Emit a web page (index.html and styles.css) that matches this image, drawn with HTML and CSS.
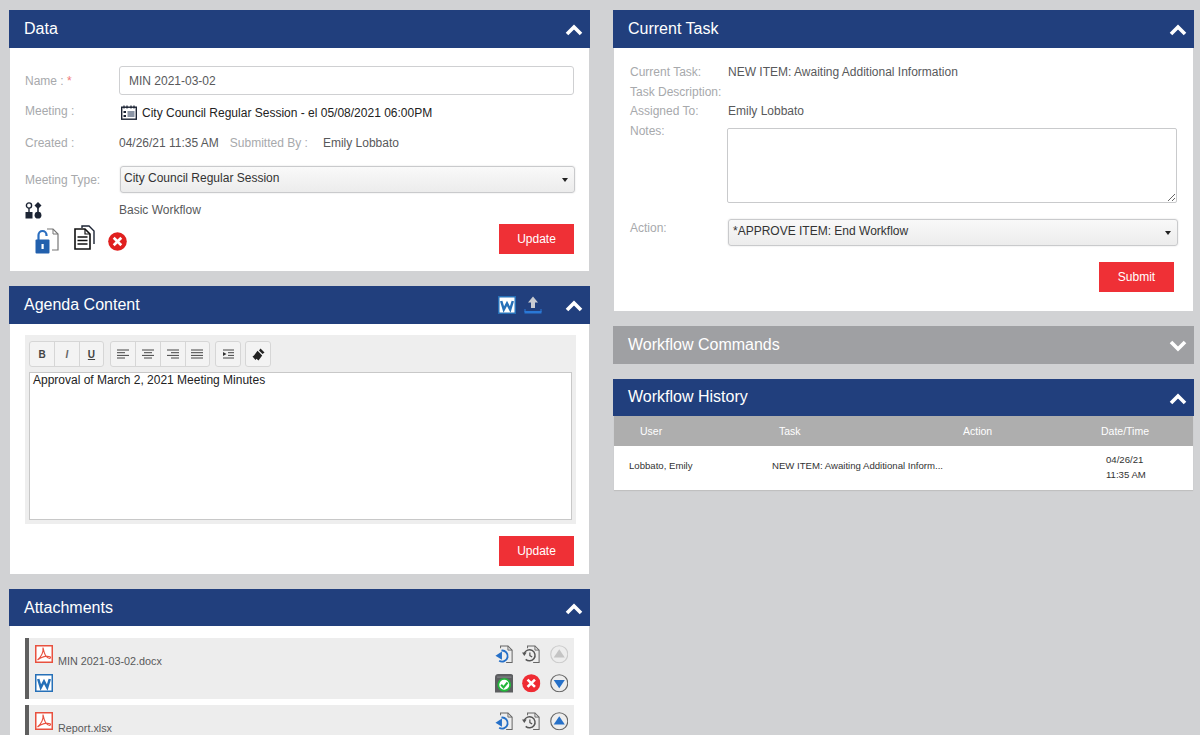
FILE: index.html
```html
<!DOCTYPE html>
<html lang="en">
<head>
  <meta charset="UTF-8">
  <title>Agenda Item</title>
  <link rel="stylesheet" href="styles.css">
</head>
<body>

<svg class="sprites" width="0" height="0">
  <symbol id="chev-up" viewBox="0 0 18 12"><path d="M2 10 L9 3 L16 10" fill="none" stroke="#fff" stroke-width="3.6"/></symbol>
  <symbol id="chev-down" viewBox="0 0 18 12"><path d="M2 2 L9 9 L16 2" fill="none" stroke="#fff" stroke-width="3.6"/></symbol>
  <symbol id="word" viewBox="0 0 18 18"><rect x="0.75" y="0.75" width="16.5" height="16.5" fill="#fff" stroke="#2670b8" stroke-width="1.5"/><path d="M3.2 5 L5.8 13.5 L9 7.5 L12.2 13.5 L14.8 5" fill="none" stroke="#2670b8" stroke-width="2.5"/></symbol>
  <symbol id="pdf" viewBox="0 0 18 18"><rect x="0.75" y="0.75" width="16.5" height="16.5" fill="#fff" stroke="#e8513f" stroke-width="1.5"/><path d="M8 2.5 C8.5 7 6 12 2.5 15 C6 12 12 10 15.5 12 C16 14 13 14 10.5 10.5 C9 8 8.5 5 8 2.5 Z" fill="none" stroke="#e8513f" stroke-width="1.1"/></symbol>
  <symbol id="x-red" viewBox="0 0 20 20"><circle cx="10" cy="10" r="9.8" fill="#e0201f"/><path d="M6 6 L14 14 M14 6 L6 14" stroke="#fff" stroke-width="2.8"/></symbol>
  <symbol id="x-bright" viewBox="0 0 20 20"><circle cx="10" cy="10" r="9.8" fill="#ef2b33"/><path d="M6 6 L14 14 M14 6 L6 14" stroke="#fff" stroke-width="2.8"/></symbol>
  <symbol id="doc-in" viewBox="0 0 20 20"><path d="M6 3.5 V1 H14 L18.5 5.5 V19 H12" fill="none" stroke="#666" stroke-width="1.1"/><path d="M14 1 V5.5 H18.5" fill="none" stroke="#666" stroke-width="1"/><path d="M7 6 A6 6 0 1 1 4.5 17" fill="none" stroke="#2670c8" stroke-width="2"/><path d="M0.5 11.5 L7.5 7 V16 Z" fill="#2670c8"/></symbol>
  <symbol id="doc-hist" viewBox="0 0 20 20"><path d="M6 3.5 V1 H14 L18.5 5.5 V19 H12" fill="none" stroke="#666" stroke-width="1.1"/><path d="M14 1 V5.5 H18.5" fill="none" stroke="#666" stroke-width="1"/><path d="M2.5 9 A6 6 0 1 1 4 15.5" fill="none" stroke="#555" stroke-width="1.6"/><path d="M0 8 H5 L2.5 12 Z" fill="#555"/><path d="M8.5 8 V11.5 L11 13" fill="none" stroke="#555" stroke-width="1.3"/></symbol>
  <symbol id="up-on" viewBox="0 0 20 20"><circle cx="10" cy="10" r="9.2" fill="none" stroke="#666" stroke-width="1.2"/><path d="M10 4.5 L16 13.5 H4 Z" fill="#2670c8"/></symbol>
  <symbol id="up-off" viewBox="0 0 20 20"><circle cx="10" cy="10" r="9.2" fill="none" stroke="#ccc" stroke-width="1.2"/><path d="M10 4.5 L16 13.5 H4 Z" fill="#c4c4c4"/></symbol>
  <symbol id="down-on" viewBox="0 0 20 20"><circle cx="10" cy="10" r="9.2" fill="none" stroke="#666" stroke-width="1.2"/><path d="M10 15.5 L16 6.5 H4 Z" fill="#2670c8"/></symbol>
</svg>

<div class="page">

  <div class="column">

    <div class="panel">
      <div class="panel-head">
        <h2>Data</h2>
        <svg class="chev"><use href="#chev-up"/></svg>
      </div>
      <div class="data-body">
        <div class="row row-name">
          <span class="label">Name : <em>*</em></span>
          <input class="text-input" type="text" value="MIN 2021-03-02">
        </div>
        <div class="row row-meeting">
          <span class="label">Meeting :</span>
          <span class="meeting-value">
            <svg class="cal" viewBox="0 0 16 15"><rect x="0.7" y="2.2" width="14.6" height="12" fill="none" stroke="#1c2434" stroke-width="1.4"/><path d="M3 0.5 V3.5 M6 0.5 V3.5 M10 0.5 V3.5 M13 0.5 V3.5" stroke="#1c2434" stroke-width="1.2"/><rect x="2.5" y="6" width="2.5" height="2" fill="#1c2434"/><rect x="2.5" y="10" width="2.5" height="2" fill="#1c2434"/><rect x="6.5" y="6" width="7" height="6" fill="#8b95a5"/></svg>
            City Council Regular Session - el 05/08/2021 06:00PM
          </span>
        </div>
        <div class="row row-created">
          <span class="label">Created :</span>
          <span class="value">04/26/21 11:35 AM</span>
          <span class="label submitted">Submitted By :</span>
          <span class="value">Emily Lobbato</span>
        </div>
        <div class="row row-type">
          <span class="label">Meeting Type:</span>
          <div class="select select-left">City Council Regular Session<i class="caret"></i></div>
        </div>
        <div class="row row-flow">
          <span class="label">
            <svg class="flow" viewBox="0 0 17 17"><circle cx="4" cy="3.5" r="2.6" fill="none" stroke="#1c2434" stroke-width="1.4"/><path d="M4 6 V10" stroke="#1c2434" stroke-width="1.4"/><rect x="0.5" y="10" width="7" height="6.5" fill="#1c2434"/><path d="M13 0 L16.5 3.5 L13 7 L9.5 3.5 Z" fill="#1c2434"/><path d="M13 6 V10" stroke="#1c2434" stroke-width="1.6"/><circle cx="13" cy="13.2" r="3.4" fill="#1c2434"/></svg>
          </span>
          <span class="value">Basic Workflow</span>
        </div>
        <div class="row row-actions">
          <svg class="ico-lock" viewBox="0 0 24 27"><path d="M12 2 H18 L23 7 V23 H17" fill="none" stroke="#777" stroke-width="1.2"/><path d="M18 2 V7 H23" fill="none" stroke="#777" stroke-width="1"/><path d="M3.5 13 V8 A4 4 0 0 1 11.5 8 V9" fill="none" stroke="#2a6ec0" stroke-width="2.2"/><rect x="0.5" y="12.5" width="14" height="14" rx="1" fill="#2260ad"/><rect x="6.5" y="17" width="2.2" height="5" fill="#fff"/></svg>
          <svg class="ico-docs" viewBox="0 0 21 25"><path d="M8 3 V1 H15 L20 6 V19" fill="none" stroke="#1c2434" stroke-width="1.4"/><path d="M1 4 H11 L16 9 V24 H1 Z" fill="#fff" stroke="#111" stroke-width="1.6"/><path d="M11 4 V9 H16" fill="none" stroke="#111" stroke-width="1.2"/><path d="M3.5 12 H13.5 M3.5 15.5 H13.5 M3.5 19 H13.5" stroke="#111" stroke-width="1.5"/></svg>
          <svg class="ico-x"><use href="#x-red"/></svg>
          <button class="btn btn-push">Update</button>
        </div>
      </div>
    </div>

    <div class="panel">
      <div class="panel-head">
        <h2>Agenda Content</h2>
        <svg class="head-word"><use href="#word"/></svg>
        <svg class="head-upload" viewBox="0 0 18 18"><path d="M9 0.5 L14 6.5 H11 V12 H7 V6.5 H4 Z" fill="#c9ccd2"/><path d="M0.5 15 H17.5 V17.5 H0.5 Z" fill="#2a78d6"/><path d="M1 13 V16 M17 13 V16" stroke="#2a78d6" stroke-width="1"/></svg>
        <svg class="chev"><use href="#chev-up"/></svg>
      </div>
      <div class="agenda-body">
        <div class="editor">
          <div class="toolbar">
            <div class="tool-group">
              <span class="tool tool-b">B</span>
              <span class="tool tool-i">I</span>
              <span class="tool tool-u">U</span>
            </div>
            <div class="tool-group">
              <span class="tool"><svg class="lines" viewBox="0 0 12 10"><path d="M0 1 H12 M0 3.7 H8 M0 6.4 H12 M0 9 H8" stroke="#444" stroke-width="1"/></svg></span>
              <span class="tool"><svg class="lines" viewBox="0 0 12 10"><path d="M0 1 H12 M2 3.7 H10 M0 6.4 H12 M2 9 H10" stroke="#444" stroke-width="1"/></svg></span>
              <span class="tool"><svg class="lines" viewBox="0 0 12 10"><path d="M0 1 H12 M4 3.7 H12 M0 6.4 H12 M4 9 H12" stroke="#444" stroke-width="1"/></svg></span>
              <span class="tool"><svg class="lines" viewBox="0 0 12 10"><path d="M0 1 H12 M0 3.7 H12 M0 6.4 H12 M0 9 H12" stroke="#444" stroke-width="1"/></svg></span>
            </div>
            <div class="tool-group">
              <span class="tool"><svg class="lines" viewBox="0 0 12 10"><path d="M1 1 H12 M6 3.7 H12 M6 6.4 H12 M1 9 H12" stroke="#444" stroke-width="1"/><path d="M1 3 L4.5 5 L1 7 Z" fill="#333"/></svg></span>
            </div>
            <div class="tool-group">
              <span class="tool"><svg class="brush" viewBox="0 0 13 13"><path d="M8.5 0.5 L12.5 4.5 L10.5 6 L7 2.5 Z" fill="#222"/><path d="M5.5 2.8 L10.2 7.5 L6.5 12.5 L4.5 10.8 L3.5 12 L0.5 8.5 L2 7.5 Z" fill="#222"/></svg></span>
            </div>
          </div>
          <div class="editor-area">Approval of March 2, 2021 Meeting Minutes</div>
        </div>
        <div class="agenda-foot"><button class="btn">Update</button></div>
      </div>
    </div>

    <div class="panel">
      <div class="panel-head panel-head-short">
        <h2>Attachments</h2>
        <svg class="chev"><use href="#chev-up"/></svg>
      </div>
      <div class="attach-body">
        <div class="attach">
          <div class="attach-row">
            <svg class="file-ico"><use href="#pdf"/></svg>
            <span class="file-name">MIN 2021-03-02.docx</span>
            <span class="attach-tools">
              <svg class="a-ico"><use href="#doc-in"/></svg>
              <svg class="a-ico"><use href="#doc-hist"/></svg>
              <svg class="a-ico"><use href="#up-off"/></svg>
            </span>
          </div>
          <div class="attach-row">
            <svg class="file-ico"><use href="#word"/></svg>
            <span class="attach-tools">
              <svg class="a-ico" viewBox="0 0 18 18"><path d="M0 3.5 Q0 0 3 0 H15 Q18 0 18 3.5 V18 H0 Z" fill="#5c5e60"/><path d="M2 3 H16" stroke="#8a8c8e" stroke-width="1"/><circle cx="9" cy="10.5" r="5.8" fill="#fff" stroke="#22b83a" stroke-width="1.8"/><path d="M6 10.5 L8.3 13 L12.2 8.3" fill="none" stroke="#22b83a" stroke-width="2"/></svg>
              <svg class="a-ico"><use href="#x-bright"/></svg>
              <svg class="a-ico"><use href="#down-on"/></svg>
            </span>
          </div>
        </div>
        <div class="attach">
          <div class="attach-row">
            <svg class="file-ico"><use href="#pdf"/></svg>
            <span class="file-name">Report.xlsx</span>
            <span class="attach-tools">
              <svg class="a-ico"><use href="#doc-in"/></svg>
              <svg class="a-ico"><use href="#doc-hist"/></svg>
              <svg class="a-ico"><use href="#up-on"/></svg>
            </span>
          </div>
        </div>
      </div>
    </div>

  </div>

  <div class="column">

    <div class="panel">
      <div class="panel-head">
        <h2>Current Task</h2>
        <svg class="chev"><use href="#chev-up"/></svg>
      </div>
      <div class="task-body">
        <div class="task-row"><span class="task-label">Current Task:</span><span class="value">NEW ITEM: Awaiting Additional Information</span></div>
        <div class="task-row"><span class="task-label">Task Description:</span></div>
        <div class="task-row"><span class="task-label">Assigned To:</span><span class="value">Emily Lobbato</span></div>
        <div class="task-notes">
          <span class="task-label">Notes:</span>
          <textarea class="notes"></textarea>
        </div>
        <div class="task-action">
          <span class="task-label">Action:</span>
          <div class="select select-right">*APPROVE ITEM: End Workflow<i class="caret"></i></div>
        </div>
        <div class="task-foot"><button class="btn">Submit</button></div>
      </div>
    </div>

    <div class="panel">
      <div class="panel-head panel-head-off">
        <h2>Workflow Commands</h2>
        <svg class="chev"><use href="#chev-down"/></svg>
      </div>
    </div>

    <div class="panel">
      <div class="panel-head panel-head-short">
        <h2 class="history-title">Workflow History</h2>
        <svg class="chev"><use href="#chev-up"/></svg>
      </div>
      <div class="history">
        <div class="history-head">
          <span class="col-user">User</span>
          <span class="col-task">Task</span>
          <span class="col-action">Action</span>
          <span class="col-date">Date/Time</span>
        </div>
        <div class="history-row">
          <span class="cell-user">Lobbato, Emily</span>
          <span class="cell-task">NEW ITEM: Awaiting Additional Inform...</span>
          <span class="cell-date">04/26/21<br>11:35 AM</span>
        </div>
      </div>
    </div>

  </div>

</div>

</body>
</html>
```

FILE: styles.css
```css
html, body {
  height: 100%;
  overflow: hidden;
}
body {
  margin: 0;
  background-color: #d1d2d4;
  font-family: "Liberation Sans", Arial, sans-serif;
  font-size: 12px;
  color: #58595b;
}
.sprites {
  display: block;
  height: 0;
}
.page {
  display: grid;
  grid-template-columns: 581px 581px;
  column-gap: 23px;
  padding: 10px 0 0 9px;
}
.column {
  display: flex;
  flex-direction: column;
  gap: 15px;
  min-width: 0;
}

/* panel headers */
.panel-head {
  display: flex;
  align-items: center;
  height: 38px;
  background-color: #213f7d;
  padding: 0 7px 0 15px;
  color: #fff;
}
.panel-head-short {
  height: 37px;
}
.panel-head h2 {
  margin: 0 auto 0 0;
  font-size: 16px;
  font-weight: normal;
}
.panel-head .history-title {
  margin-bottom: 2px;
}
.panel-head-off {
  background-color: #9fa0a3;
}
.chev {
  width: 18px;
  height: 12px;
  margin-top: 2px;
}
.head-word {
  width: 18px;
  height: 18px;
  margin-right: 8px;
}
.head-upload {
  width: 18px;
  height: 18px;
  margin-right: 23px;
}

/* data panel */
.data-body {
  background-color: #fff;
  height: 223px;
  box-sizing: border-box;
  margin: 0 1px;
  padding: 18px 15px 0 15px;
}
.row {
  display: flex;
  align-items: center;
}
.label {
  color: #a7a9ac;
  width: 94px;
  flex: none;
}
.label em {
  color: #f0787a;
  font-style: normal;
}
.value {
  color: #58595b;
}
.text-input {
  flex: 1;
  min-width: 0;
  height: 29px;
  box-sizing: border-box;
  border: 1px solid #cfd0d2;
  border-radius: 3px;
  padding: 0 9px;
  font-family: inherit;
  font-size: 12px;
  color: #58595b;
  outline: none;
}
.row-meeting {
  margin-top: 8px;
  height: 20px;
}
.row-meeting .label {
  margin-top: -5px;
}
.meeting-value {
  display: flex;
  align-items: center;
  gap: 5px;
  color: #222;
}
.cal {
  width: 16px;
  height: 15px;
  margin: -2px 0 0 2px;
}
.row-created {
  margin-top: 10px;
  height: 20px;
}
.submitted {
  width: auto;
  margin: 0 15px 0 11px;
}
.row-type {
  margin-top: 13px;
}
.select {
  position: relative;
  flex: none;
  box-sizing: border-box;
  height: 27px;
  line-height: 22px;
  border: 1px solid #c9cacc;
  border-radius: 3px;
  box-shadow: 0 0 2px #ddd;
  background: linear-gradient(#f9f9f9, #ececec);
  color: #333;
  padding: 0 4px;
}
.select-left {
  width: 455px;
  margin-left: 1px;
  padding-left: 3px;
}
.caret {
  position: absolute;
  right: 6px;
  top: 11px;
  border-left: 3.5px solid transparent;
  border-right: 3.5px solid transparent;
  border-top: 4px solid #222;
}
.row-flow {
  margin-top: 7px;
  height: 20px;
}
.flow {
  display: block;
  width: 17px;
  height: 17px;
}
.row-actions {
  margin-top: 4px;
  height: 30px;
  padding-left: 10px;
}
.ico-lock {
  width: 24px;
  height: 27px;
  margin-top: 2px;
}
.ico-docs {
  width: 21px;
  height: 25px;
  margin: -3px 0 0 15px;
}
.ico-x {
  width: 19px;
  height: 19px;
  margin: 5px 0 0 13px;
}
.btn {
  width: 75px;
  height: 30px;
  border: none;
  background-color: #ef3036;
  color: #fff;
  font-family: inherit;
  font-size: 12px;
  font-weight: normal;
  padding: 0;
}
.btn-push {
  margin-left: auto;
}

/* agenda panel */
.agenda-body {
  background-color: #fff;
  height: 250px;
  box-sizing: border-box;
  margin: 0 1px;
  padding: 11px 13px 0 15px;
}
.editor {
  height: 189px;
  box-sizing: border-box;
  background-color: #eeeeee;
  padding: 6px 4px 4px 4px;
}
.toolbar {
  display: flex;
  gap: 5px;
  height: 26px;
}
.tool-group {
  display: flex;
  border: 1px solid #d6d6d6;
  border-radius: 3px;
  background-color: #f3f3f3;
}
.tool-group:first-child {
  margin-right: 1px;
}
.tool-group:last-child {
  margin-left: -1px;
}
.tool {
  display: flex;
  align-items: center;
  justify-content: center;
  box-sizing: border-box;
  width: 24.67px;
  border-left: 1px solid #d6d6d6;
  font-size: 10px;
  color: #444;
}
.tool:first-child {
  border-left: none;
  width: 24px;
}
.tool-b {
  font-weight: bold;
}
.tool-i {
  font-style: italic;
  font-weight: bold;
  color: #666;
}
.tool-u {
  font-weight: bold;
  text-decoration: underline;
}
.lines {
  width: 12px;
  height: 10px;
}
.brush {
  width: 13px;
  height: 13px;
}
.editor-area {
  box-sizing: border-box;
  height: 148px;
  margin-top: 5px;
  background-color: #fff;
  border: 1px solid #c8c8c8;
  padding: 1px 3px;
  color: #222;
  line-height: 13px;
}
.agenda-foot {
  display: flex;
  justify-content: flex-end;
  margin-top: 12px;
  padding-right: 2px;
}

/* attachments */
.attach-body {
  background-color: #fff;
  margin: 0 1px;
  padding: 12px 15px 10px;
  display: flex;
  flex-direction: column;
  gap: 6px;
}
.attach {
  background-color: #ededed;
  border-left: 4px solid #5f5f5f;
  height: 61px;
  box-sizing: border-box;
  padding: 7px 6px 0 6px;
}
.attach-row {
  display: flex;
  height: 29px;
}
.file-ico {
  width: 18px;
  height: 18px;
}
.file-name {
  font-size: 10.8px;
  margin: 10px 0 0 5px;
}
.attach-tools {
  display: flex;
  gap: 9px;
  margin-left: auto;
}
.a-ico {
  width: 18.5px;
  height: 18.5px;
}

/* current task */
.task-body {
  background-color: #fff;
  height: 263px;
  box-sizing: border-box;
  margin: 0 1px;
  padding: 15px 14px 0 16px;
}
.task-row {
  display: flex;
  height: 19.5px;
  line-height: 19px;
}
.task-label {
  color: #a7a9ac;
  width: 98px;
  flex: none;
  white-space: nowrap;
}
.task-notes {
  display: flex;
  margin-top: 6px;
}
.task-notes .task-label {
  margin-top: -4px;
}
.notes {
  display: block;
  width: 450px;
  height: 75px;
  box-sizing: border-box;
  margin: 0 0 0 -1px;
  border: 1px solid #c9cacc;
  border-radius: 2px;
}
.task-action {
  display: flex;
  margin-top: 16px;
}
.task-action .task-label {
  margin-top: 2px;
}
.select-right {
  width: 450px;
}
.task-foot {
  display: flex;
  justify-content: flex-end;
  margin-top: 16px;
  padding-right: 5px;
}

/* history */
.history {
  margin: 0 1px;
  background-color: #fff;
  box-shadow: 0 1px 1px #c0c0c0;
}
.history-head {
  display: flex;
  align-items: center;
  height: 30px;
  background-color: #aeaeae;
  color: #fff;
  font-size: 10.5px;
}
.col-user {
  margin-left: 26px;
  width: 139px;
}
.col-task {
  width: 184px;
}
.col-action {
  width: 138px;
}
.history-row {
  display: flex;
  align-items: center;
  height: 44px;
  box-sizing: border-box;
  padding-bottom: 6px;
  color: #333;
  font-size: 9.6px;
}
.cell-user {
  margin-left: 15px;
  width: 143px;
}
.cell-task {
  width: 334px;
}
.cell-date {
  line-height: 14.5px;
  margin-top: 5px;
}
```
